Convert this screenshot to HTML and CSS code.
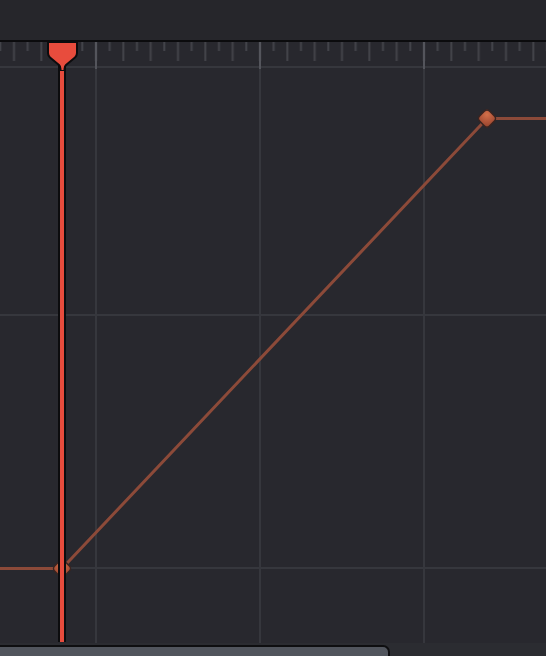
FILE: index.html
```html
<!DOCTYPE html>
<html>
<head>
    <meta charset="UTF-8">
    <title>Curve Editor</title>
    <link rel="stylesheet" href="styles.css">
</head>
<body>
    <div class="toolbar"></div>

    <div class="graph">
        <svg class="plot" width="546" height="601" viewBox="0 0 546 601">
            <defs>
                <!-- one short + one long tick, repeated along the ruler -->
                <pattern id="ticks" x="0" y="0" width="27.333" height="24" patternUnits="userSpaceOnUse">
                    <rect x="-0.7" y="0" width="2" height="9" class="tick"/>
                    <rect x="26.63" y="0" width="2" height="9" class="tick"/>
                    <rect x="13" y="0" width="2" height="19" class="tick"/>
                </pattern>
                <radialGradient id="key" cx="0.3" cy="0.3" r="0.8">
                    <stop offset="0" stop-color="#d2704a"/>
                    <stop offset="0.6" stop-color="#b2563a"/>
                    <stop offset="1" stop-color="#9c4830"/>
                </radialGradient>
            </defs>

            <!-- ruler -->
            <rect x="0" y="0" width="546" height="24" fill="url(#ticks)"/>

            <!-- grid -->
            <g class="grid">
                <line x1="0" y1="25" x2="546" y2="25"/>
                <line x1="0" y1="273" x2="546" y2="273"/>
                <line x1="0" y1="526" x2="546" y2="526"/>
                <line x1="96" y1="24" x2="96" y2="601"/>
                <line x1="260" y1="24" x2="260" y2="601"/>
                <line x1="424" y1="24" x2="424" y2="601"/>
            </g>
            <g class="major">
                <line x1="96" y1="0" x2="96" y2="27"/>
                <line x1="260" y1="0" x2="260" y2="27"/>
                <line x1="424" y1="0" x2="424" y2="27"/>
            </g>

            <!-- animation curve -->
            <polyline class="curve" points="-2,526.5 62,526.5 487,76.5 548,76.5"/>

            <!-- keyframes -->
            <rect class="keyframe" x="55" y="519.5" width="14" height="14" rx="3.5" transform="rotate(45 62 526.5)"/>
            <rect class="keyframe" x="480" y="69.5" width="14" height="14" rx="3.5" transform="rotate(45 487 76.5)"/>
        </svg>

        <div class="playhead-stem"></div>
        <svg class="playhead-head" width="36" height="30" viewBox="0 0 36 30">
            <path d="M3,1 H32 V12 Q32,14.5 30,16.5 L21,24 Q19.5,25.5 19.5,28 V30 H15.5 V28 Q15.5,25.5 14,24 L5,16.5 Q3,14.5 3,12 Z"/>
        </svg>
    </div>

    <div class="scrollbar">
        <div class="thumb"></div>
    </div>
</body>
</html>
```

FILE: styles.css
```css
body {
    margin: 0;
    width: 546px;
    height: 656px;
    overflow: hidden;
    background: #28282e;
    font-family: 'Liberation Sans', sans-serif;
}

.toolbar {
    height: 40px;
    background: #26262b;
    border-bottom: 2px solid #0b0b0d;
}

.graph {
    position: relative;
    height: 601px;
    background: #28282e;
}

.plot {
    display: block;
}

.tick {
    fill: #424349;
}

.grid line {
    stroke: #36373d;
    stroke-width: 2;
}

.major line {
    stroke: #54555c;
    stroke-width: 2;
}

.curve {
    fill: none;
    stroke: #8c4a39;
    stroke-width: 3;
    stroke-linejoin: round;
}

.keyframe {
    fill: url(#key);
    stroke: #3a2420;
    stroke-width: 1.5;
}

.playhead-stem {
    position: absolute;
    left: 58px;
    top: 22px;
    width: 4px;
    height: 578px;
    background: #e84c3d;
    border-left: 2px solid #0c0c0e;
    border-right: 2px solid #0c0c0e;
}

.playhead-head {
    position: absolute;
    left: 44.5px;
    top: -1px;
}

.playhead-head path {
    fill: #e84c3d;
    stroke: #0c0c0e;
    stroke-width: 2;
    stroke-linejoin: round;
}

.scrollbar {
    height: 13px;
    padding-top: 2px;
    box-sizing: border-box;
    background: #2b2c31;
    overflow: hidden;
}

.thumb {
    width: 388px;
    height: 20px;
    margin-left: -2px;
    background: #51555d;
    border: 2px solid #0e0e10;
    border-radius: 0 7px 0 0;
}
```
